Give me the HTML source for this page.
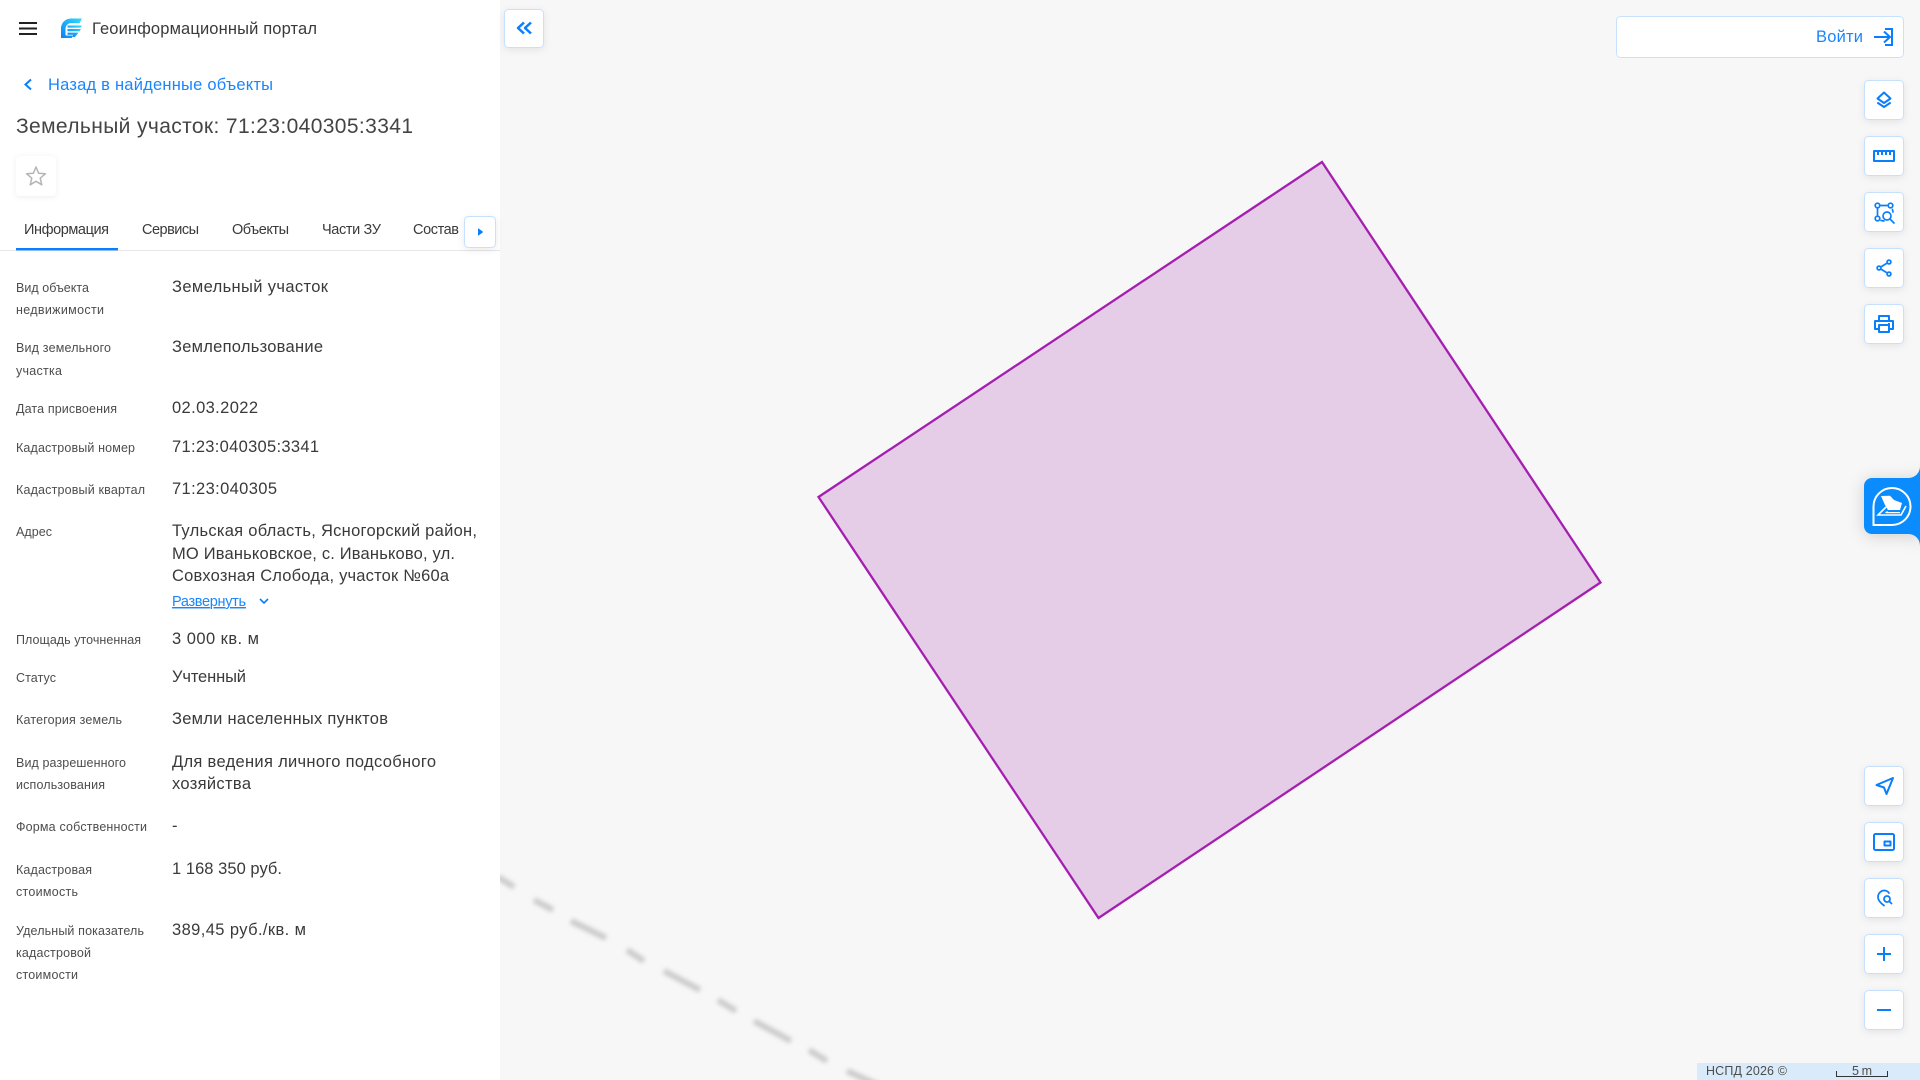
<!DOCTYPE html>
<html lang="ru">
<head>
<meta charset="utf-8">
<title>Геоинформационный портал</title>
<style>
html,body{margin:0;padding:0;width:1920px;height:1080px;overflow:hidden;background:#f7f7f7}
svg{display:block;position:absolute;left:0;top:0}
text{font-family:"Liberation Sans","DejaVu Sans",sans-serif;white-space:pre}
.l{font-size:12.5px;fill:#4d4d4d}
.v{font-size:16.5px;fill:#3a3a3a}
.t{font-size:14.5px;fill:#3a3a3a}
.b{fill:#fff;stroke:#c6e1fd;stroke-width:1;filter:drop-shadow(0 2px 4px rgba(0,0,0,.08))}
.i{fill:none;stroke:#0a7ffe;stroke-width:2;stroke-linecap:round;stroke-linejoin:round}
.i2{fill:none;stroke:#0a7ffe;stroke-width:1.7;stroke-linecap:round;stroke-linejoin:round}
</style>
</head>
<body>
<svg width="1920" height="1080" viewBox="0 0 1920 1080" xmlns="http://www.w3.org/2000/svg">
<defs>
<filter id="blur" x="-10%" y="-10%" width="120%" height="120%"><feGaussianBlur stdDeviation="2"/></filter>
<linearGradient id="lg" x1="0" y1="1" x2="1" y2="0"><stop offset="0" stop-color="#0a7ffe"/><stop offset="1" stop-color="#2fe0f5"/></linearGradient>
<clipPath id="mapclip"><rect x="500" y="0" width="1420" height="1080"/></clipPath>
</defs>
<rect width="1920" height="1080" fill="#f7f7f7"/>

<!-- map -->
<g clip-path="url(#mapclip)">
<g filter="url(#blur)" stroke="#cbcbcb" stroke-width="6" stroke-linecap="butt" fill="none">
<path d="M498 877L514 887M534 900L553 910M571 921L606 938M627 950L644 961M664 971L700 990M718 1000L736 1011M754 1021L791 1041M809 1050L827 1061M847 1071L880 1086"/>
</g>
</g>
<polygon points="1322,162 1600.5,582.5 1098.5,918 818.5,497" fill="#e5cde8" stroke="#a41fb0" stroke-width="2.3"/>

<!-- left panel -->
<rect x="0" y="0" width="500" height="1080" fill="#fff"/>
<path d="M19 23H37M19 28.5H37M19 34H37" stroke="#222" stroke-width="2" fill="none"/>
<g>
<path d="M82 18.5H71.5C65 18.5 61 23 61 29V38H72L72.5 35.5H66.5C65.8 35.5 65.5 35 65.5 34V29C65.5 25.5 68 23 71.5 23H79.5Z" fill="url(#lg)"/>
<path d="M67.5 25.5H82L80.5 27.6H67.5ZM67.5 29H81L79.5 31.2H67.5ZM67.5 32.6H78.5L75 37H72.5L72.8 34.8H67.5Z" fill="url(#lg)"/>
</g>
<text x="92" y="34" font-size="16.5" fill="#3a3a3a" textLength="225" lengthAdjust="spacing">Геоинформационный портал</text>

<path d="M31 79.5L25.5 84.5L31 89.5" fill="none" stroke="#0a7ffe" stroke-width="2"/>
<text x="48" y="90" font-size="16.5" fill="#1a86fb" textLength="225" lengthAdjust="spacing">Назад в найденные объекты</text>
<text x="16" y="133" font-size="21" fill="#444" textLength="397" lengthAdjust="spacing">Земельный участок: 71:23:040305:3341</text>

<rect x="16" y="156" width="40" height="40" rx="4" fill="#fff" style="filter:drop-shadow(0 1px 3px rgba(0,0,0,.07))"/>
<path d="M36 167L38.6 173.2L45.4 173.8L40.2 178.2L41.8 184.8L36 181.3L30.2 184.8L31.8 178.2L26.6 173.8L33.4 173.2Z" fill="none" stroke="#b5b5b5" stroke-width="1.5" stroke-linejoin="round"/>

<text class="t" x="24" y="234" textLength="85" lengthAdjust="spacing">Информация</text>
<text class="t" x="142" y="234" textLength="57" lengthAdjust="spacing">Сервисы</text>
<text class="t" x="232" y="234" textLength="57" lengthAdjust="spacing">Объекты</text>
<text class="t" x="322" y="234" textLength="59" lengthAdjust="spacing">Части ЗУ</text>
<text class="t" x="413" y="234" textLength="46" lengthAdjust="spacing">Состав</text>
<rect x="0" y="250" width="500" height="1" fill="#e7e7e7"/>
<rect x="16" y="248" width="102" height="2.4" fill="#0a7ffe"/>
<rect class="b" x="464.5" y="216.5" width="31" height="31" rx="4"/>
<path d="M478.5 229L482.5 232L478.5 235Z" fill="#0a7ffe" stroke="#0a7ffe" stroke-width="1" stroke-linejoin="round"/>

<!-- labels -->
<text class="l" x="16" y="292" textLength="73" lengthAdjust="spacing">Вид объекта</text>
<text class="l" x="16" y="314" textLength="88" lengthAdjust="spacing">недвижимости</text>
<text class="l" x="16" y="352" textLength="95" lengthAdjust="spacing">Вид земельного</text>
<text class="l" x="16" y="375" textLength="46" lengthAdjust="spacing">участка</text>
<text class="l" x="16" y="413" textLength="101" lengthAdjust="spacing">Дата присвоения</text>
<text class="l" x="16" y="452" textLength="119" lengthAdjust="spacing">Кадастровый номер</text>
<text class="l" x="16" y="494" textLength="129" lengthAdjust="spacing">Кадастровый квартал</text>
<text class="l" x="16" y="536" textLength="36" lengthAdjust="spacing">Адрес</text>
<text class="l" x="16" y="644" textLength="125" lengthAdjust="spacing">Площадь уточненная</text>
<text class="l" x="16" y="682" textLength="40" lengthAdjust="spacing">Статус</text>
<text class="l" x="16" y="724" textLength="106" lengthAdjust="spacing">Категория земель</text>
<text class="l" x="16" y="767" textLength="110" lengthAdjust="spacing">Вид разрешенного</text>
<text class="l" x="16" y="789" textLength="89" lengthAdjust="spacing">использования</text>
<text class="l" x="16" y="831" textLength="131" lengthAdjust="spacing">Форма собственности</text>
<text class="l" x="16" y="874" textLength="76" lengthAdjust="spacing">Кадастровая</text>
<text class="l" x="16" y="896" textLength="62" lengthAdjust="spacing">стоимость</text>
<text class="l" x="16" y="935" textLength="128" lengthAdjust="spacing">Удельный показатель</text>
<text class="l" x="16" y="957" textLength="75" lengthAdjust="spacing">кадастровой</text>
<text class="l" x="16" y="979" textLength="62" lengthAdjust="spacing">стоимости</text>

<!-- values -->
<text class="v" x="172" y="292" textLength="156" lengthAdjust="spacing">Земельный участок</text>
<text class="v" x="172" y="352" textLength="151" lengthAdjust="spacing">Землепользование</text>
<text class="v" x="172" y="413" textLength="86" lengthAdjust="spacing">02.03.2022</text>
<text class="v" x="172" y="452" textLength="147" lengthAdjust="spacing">71:23:040305:3341</text>
<text class="v" x="172" y="494" textLength="105" lengthAdjust="spacing">71:23:040305</text>
<text class="v" x="172" y="536" textLength="305" lengthAdjust="spacing">Тульская область, Ясногорский район,</text>
<text class="v" x="172" y="559" textLength="283" lengthAdjust="spacing">МО Иваньковское, с. Иваньково, ул.</text>
<text class="v" x="172" y="581" textLength="277" lengthAdjust="spacing">Совхозная Слобода, участок №60а</text>
<text x="172" y="606" font-size="14.5" fill="#1a86fb" text-decoration="underline" textLength="74" lengthAdjust="spacing">Развернуть</text>
<path d="M260 599L264 603L268 599" fill="none" stroke="#0a7ffe" stroke-width="1.6"/>
<text class="v" x="172" y="644" textLength="87" lengthAdjust="spacing">3 000 кв. м</text>
<text class="v" x="172" y="682" textLength="74" lengthAdjust="spacing">Учтенный</text>
<text class="v" x="172" y="724" textLength="216" lengthAdjust="spacing">Земли населенных пунктов</text>
<text class="v" x="172" y="767" textLength="264" lengthAdjust="spacing">Для ведения личного подсобного</text>
<text class="v" x="172" y="789" textLength="79" lengthAdjust="spacing">хозяйства</text>
<text class="v" x="172" y="831">-</text>
<text class="v" x="172" y="874" textLength="110" lengthAdjust="spacing">1 168 350 руб.</text>
<text class="v" x="172" y="935" textLength="134" lengthAdjust="spacing">389,45 руб./кв. м</text>

<!-- collapse -->
<rect class="b" x="504.5" y="9.5" width="39" height="38" rx="4"/>
<path d="M524 22.5L518 28L524 33.5M531 22.5L525 28L531 33.5" class="i" style="stroke-width:2.5;stroke-linecap:butt"/>

<!-- login -->
<rect x="1616.5" y="16.5" width="287" height="41" rx="4" fill="#fff" stroke="#c6e1fd" stroke-width="1"/>
<text x="1816" y="42" font-size="16.5" fill="#1a86fb" textLength="47" lengthAdjust="spacing">Войти</text>
<path d="M1874 37H1889M1884 31.5L1890 37L1884 42.5M1885 29H1892V45H1885" class="i" style="stroke-linecap:butt;stroke-linejoin:miter"/>

<!-- right buttons -->
<rect class="b" x="1864.5" y="80.5" width="39" height="39" rx="4"/>
<path d="M1884 92.5L1890.5 98.5L1884 103L1877.5 98.5Z" class="i"/>
<path d="M1878 103L1884 107L1890 103" class="i"/>

<rect class="b" x="1864.5" y="136.5" width="39" height="39" rx="4"/>
<path d="M1874 151H1894V161H1874ZM1878 151V155M1882 151V155M1886 151V155M1890 151V155" class="i" style="stroke-linecap:butt"/>

<rect class="b" x="1864.5" y="192.5" width="39" height="39" rx="4"/>
<g class="i2">
<circle cx="1877.5" cy="205.5" r="2.3"/><circle cx="1890.5" cy="205.5" r="2.3"/><circle cx="1877.5" cy="218.5" r="2.3"/>
<circle cx="1887" cy="216" r="4"/>
<path d="M1881 205.5H1887M1877.5 209V215M1890.5 219.5L1894 223M1892.5 209.5L1893 212M1881 220.5L1884 221"/>
</g>

<rect class="b" x="1864.5" y="248.5" width="39" height="39" rx="4"/>
<g class="i2">
<circle cx="1889" cy="262" r="1.9"/><circle cx="1879" cy="268" r="1.9"/><circle cx="1889" cy="274" r="1.9"/>
<path d="M1887.3 263L1880.7 267M1880.7 269L1887.3 273"/>
</g>

<rect class="b" x="1864.5" y="304.5" width="39" height="39" rx="4"/>
<path d="M1879 320V316H1889V320M1879 329H1875V321H1893V329H1889M1879 325H1889V332H1879Z" class="i" style="stroke-linecap:butt"/>
<rect x="1888" y="323" width="2" height="1.5" fill="#0a7ffe"/>

<rect class="b" x="1864.5" y="766.5" width="39" height="39" rx="4"/>
<path d="M1893 778L1876.5 785L1884 787.5L1886.5 794Z" class="i" style="stroke-width:2"/>

<rect class="b" x="1864.5" y="822.5" width="39" height="39" rx="4"/>
<rect x="1874" y="834" width="20" height="16" rx="1.5" class="i"/>
<rect x="1884.5" y="841.5" width="6" height="4" class="i"/>

<rect class="b" x="1864.5" y="878.5" width="39" height="39" rx="4"/>
<g class="i" style="stroke-width:1.8">
<path d="M1884 905.5C1880.5 903 1878 900.5 1878 897C1878 893.5 1881 890.5 1884 890.5C1886.2 890.5 1888 891.5 1889 893"/>
<circle cx="1887" cy="899" r="3"/>
<path d="M1889.2 901.2L1891.5 903.5"/>
</g>

<rect class="b" x="1864.5" y="934.5" width="39" height="39" rx="4"/>
<path d="M1877 954H1891M1884 947V961" class="i" style="stroke-linecap:butt"/>

<rect class="b" x="1864.5" y="990.5" width="39" height="39" rx="4"/>
<path d="M1877 1010H1891" class="i" style="stroke-linecap:butt"/>

<!-- blue widget -->
<path d="M1920 466C1920 473 1915 478 1908 478H1872C1867.5 478 1864 481.5 1864 486V526C1864 530.5 1867.5 534 1872 534H1908C1915 534 1920 539 1920 546Z" fill="#0a8cff" style="filter:drop-shadow(0 2px 8px rgba(0,0,0,.16))"/>
<path d="M1873.5 525V506.5A18.5 18.5 0 1 1 1892 525Z" fill="none" stroke="#fff" stroke-width="2"/>
<path d="M1881 496L1890 495.7L1894 500L1902 503L1900 510L1888 510L1885 505Z" fill="#fff"/>
<path d="M1886 507L1878 515H1901L1906 506" fill="none" stroke="#fff" stroke-width="1.6"/>
<path d="M1888 511.8L1885.5 512.6H1900" fill="none" stroke="#fff" stroke-width="1.2"/>

<!-- bottom bar -->
<rect x="1697" y="1063" width="223" height="17" fill="#d9eafa"/>
<text x="1706" y="1075" font-size="12.5" fill="#4d4d4d" textLength="81" lengthAdjust="spacing">НСПД 2026 ©</text>
<text x="1852" y="1075" font-size="12.5" fill="#4d4d4d" textLength="20" lengthAdjust="spacing">5 m</text>
<path d="M1836.5 1071V1076.5H1887.5V1071" fill="none" stroke="#333" stroke-width="1"/>
</svg>
</body>
</html>
